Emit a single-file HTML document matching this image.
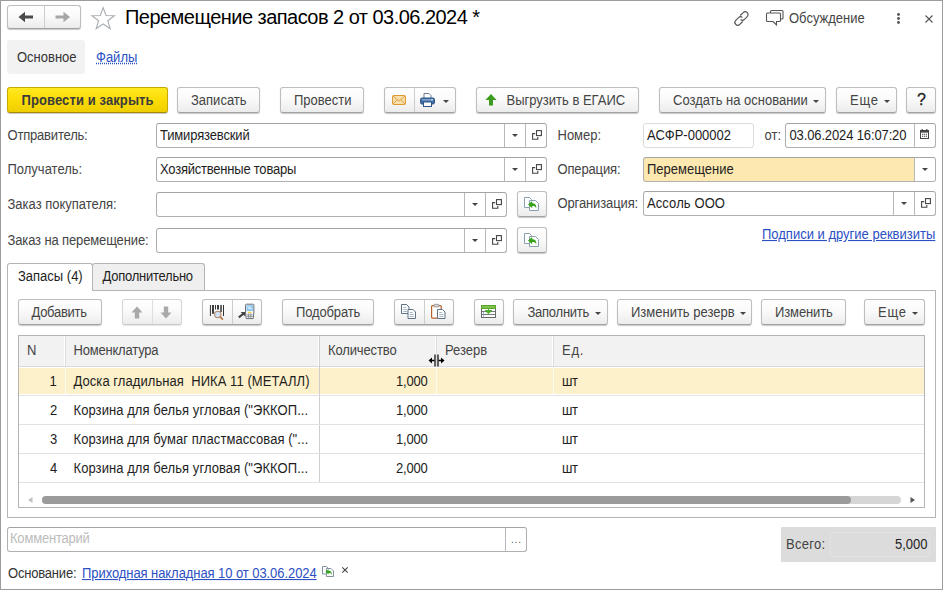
<!DOCTYPE html>
<html lang="ru"><head><meta charset="utf-8"><title>Перемещение запасов</title>
<style>
*{box-sizing:border-box;margin:0;padding:0}
html,body{width:943px;height:590px;overflow:hidden;background:#fff}
body{font-family:"Liberation Sans",Arial,sans-serif;font-size:13px;color:#333;position:relative}
.abs{position:absolute}
svg{position:absolute;overflow:visible}
.frame{position:absolute;left:0;top:0;width:943px;height:590px;border:1px solid #9c9c9c;pointer-events:none}
.btn{position:absolute;height:26px;border:1px solid #bdbdbd;border-bottom-color:#a2a2a2;border-radius:3px;background:linear-gradient(#fff,#fafafa 45%,#ececec);box-shadow:0 1px 1px rgba(0,0,0,.22)}
.btn.y{background:linear-gradient(#ffe920,#fbdc06 50%,#efce00);border-color:#c8a900;border-bottom-color:#a58a00}
.btn.dis{border-color:#d6d6d6;border-bottom-color:#c8c8c8;box-shadow:0 1px 1px rgba(0,0,0,.10)}
.bsep{position:absolute;top:1px;width:1px;height:24px;background:#cdcdcd}
.t{position:absolute;white-space:nowrap;line-height:16px;font-size:13px;color:#444;transform:scaleY(1.077);transform-origin:0 0}
.t.d{color:#1e1e1e}
.inp{position:absolute;height:25px;border:1px solid #b0b0b0;border-top-color:#a3a3a3;border-radius:3px;background:#fff;overflow:hidden}
.inp i{position:absolute;top:0;bottom:0;width:1px;background:#b8b8b8}
.inp b{position:absolute;top:0;bottom:0;background:#fff}
.car{position:absolute;width:0;height:0;border-left:3px solid transparent;border-right:3px solid transparent;border-top:3px solid #444}
a{color:#2b50c4;text-decoration:underline;text-underline-offset:1px}
.hl{position:absolute;top:336px;height:30px}
.row{position:absolute;left:19px;width:905px;height:1px;background:#e2e2e2}
</style></head><body>

<!-- title bar -->
<div class="btn" style="left:7px;top:5px;width:74px;height:24px"></div>
<div class="bsep" style="left:44px;top:6px;height:22px"></div>
<svg style="left:7px;top:5px" width="75" height="24" viewBox="0 0 75 24">
<path d="M11.5 12 L18 6.8 V10.6 H26 V13.4 H18 V17.2 Z" fill="#4a4a4a"/>
<path d="M63 12 L56.5 6.8 V10.6 H48.5 V13.4 H56.5 V17.2 Z" fill="#a6a6a6"/>
</svg>
<svg style="left:90.1px;top:5.5px" width="26.35" height="24.15" viewBox="0 0 24 22"><path d="M12 1.5 L14.6 8.6 L22.2 8.8 L16.2 13.4 L18.4 20.6 L12 16.4 L5.6 20.6 L7.8 13.4 L1.8 8.8 L9.4 8.6 Z" fill="#fff" stroke="#a8adb3" stroke-width="1"/></svg>
<div class="t" id="title" style="left:125px;top:5px;font-size:20px;line-height:24px;color:#000;letter-spacing:-0.53px;transform:none">Перемещение запасов 2 от 03.06.2024 *</div>

<!-- top-right icons -->
<svg style="left:732.5px;top:9.5px" width="17" height="17" viewBox="0 0 16 16" fill="none" stroke="#555" stroke-width="1.1">
<path d="M6.8 5.2 L9.6 2.4 a2.6 2.6 0 0 1 3.8 3.8 L10.8 8.8 a2.6 2.6 0 0 1 -3.6 0.2"/>
<path d="M9.2 10.8 L6.4 13.6 a2.6 2.6 0 0 1 -3.8 -3.8 L5.2 7.2 a2.6 2.6 0 0 1 3.6 -0.2"/>
</svg>
<svg style="left:766px;top:10px" width="18" height="16" viewBox="0 0 18 16" fill="#fff" stroke="#555" stroke-width="1.1">
<path d="M4.5 3 V1.5 a1 1 0 0 1 1 -1 H16 a1 1 0 0 1 1 1 V8 a1 1 0 0 1 -1 1 H14.5"/>
<path d="M1.5 3 H13.5 a1 1 0 0 1 1 1 V10.5 a1 1 0 0 1 -1 1 H10.5 V15 L7 11.5 H1.5 a1 1 0 0 1 -1 -1 V4 a1 1 0 0 1 1 -1 Z"/>
</svg>
<div class="t" id="obs" style="left:789px;top:10px">Обсуждение</div>
<svg style="left:896px;top:13px" width="5" height="11" viewBox="0 0 5 11" fill="#555"><circle cx="2.5" cy="1.5" r="1.45"/><circle cx="2.5" cy="5.5" r="1.45"/><circle cx="2.5" cy="9.5" r="1.45"/></svg>
<svg style="left:925px;top:15px" width="8" height="8" viewBox="0 0 8 8" stroke="#555" stroke-width="1.1"><path d="M0.5 0.5 L7.5 7.5 M7.5 0.5 L0.5 7.5"/></svg>

<!-- nav tabs -->
<div class="abs" style="left:7px;top:40px;width:78px;height:34px;background:#f2f2f2;border-radius:3px"></div>
<div class="t" id="osn" style="left:17px;top:49px;color:#333">Основное</div>
<div class="t" id="fil" style="left:96px;top:49px"><a style="text-decoration:underline dotted;text-underline-offset:1px">Файлы</a></div>

<!-- command bar -->
<div class="btn y" style="left:7px;top:87px;width:161px"></div>
<div class="t" id="b1" style="letter-spacing:0.1px;left:21.5px;top:92px;font-weight:bold;color:#3c3c3c">Провести и закрыть</div>
<div class="btn" style="left:177px;top:87px;width:83px"></div>
<div class="t" id="b2" style="left:191px;top:92px">Записать</div>
<div class="btn" style="left:280px;top:87px;width:84px"></div>
<div class="t" id="b3" style="left:294px;top:92px">Провести</div>
<div class="btn" style="left:384px;top:87px;width:72px"></div>
<div class="bsep" style="left:414px;top:88px"></div>
<!-- mail -->
<svg style="left:392px;top:95px" width="14" height="10" viewBox="0 0 14 10"><rect x="0.5" y="0.5" width="13" height="9" rx="1" fill="#f8dfae" stroke="#e0982f"/><path d="M1 1 L7 6 L13 1 M1 9 L5.2 4.6 M13 9 L8.8 4.6" fill="none" stroke="#e0982f" stroke-width="0.9"/></svg>
<!-- printer -->
<svg style="left:420px;top:93px" width="15" height="14" viewBox="0 0 15 14">
<path d="M4 5 V0.5 H9 L11 2.5 V5" fill="#fff" stroke="#6b7f95" stroke-width="1"/>
<rect x="0.5" y="5" width="14" height="6" rx="1.5" fill="#3f6da3" stroke="#2f5688"/>
<rect x="2" y="6.2" width="11" height="1.3" fill="#8fb0d6"/>
<rect x="3.5" y="9" width="8" height="4.5" fill="#fff" stroke="#2f5688"/>
<circle cx="12" cy="6.8" r="0.7" fill="#fff"/>
</svg>
<div class="car" style="left:443px;top:100px"></div>
<div class="btn" style="left:476px;top:87px;width:163px"></div>
<svg style="left:485px;top:94px" width="12" height="12" viewBox="0 0 12 12"><path d="M6 0 L11.6 6 H8 V11.6 H4 V6 H0.4 Z" fill="#3c9a1e"/></svg>
<div class="t" id="b4" style="left:506.5px;top:92px">Выгрузить в ЕГАИС</div>
<div class="btn" style="left:659px;top:87px;width:167px"></div>
<div class="t" id="b5" style="left:673px;top:92px">Создать на основании</div>
<div class="car" style="left:813px;top:100px"></div>
<div class="btn" style="left:836px;top:87px;width:61px"></div>
<div class="t" id="b6" style="letter-spacing:0.8px;left:850px;top:92px">Еще</div>
<div class="car" style="left:884px;top:100px"></div>
<div class="btn" style="left:906px;top:87px;width:30px"></div>
<div class="t" id="b7" style="left:917px;top:91px;font-size:16px;line-height:18px;color:#222;transform:none;-webkit-text-stroke:0.3px #222">?</div>

<!-- left fields -->
<div class="t" id="l1" style="letter-spacing:-0.19px;left:7.5px;top:127px">Отправитель:</div>
<div class="inp" style="left:156px;top:123px;width:391px"><i style="left:347px"></i><i style="left:368px"></i></div>
<div class="t d" id="v1" style="letter-spacing:-0.15px;left:160px;top:127px">Тимирязевский</div>
<div class="t" id="l2" style="left:7.5px;top:161px">Получатель:</div>
<div class="inp" style="left:156px;top:157px;width:391px"><i style="left:347px"></i><i style="left:368px"></i></div>
<div class="t d" id="v2" style="letter-spacing:-0.22px;left:160px;top:161px">Хозяйственные товары</div>
<div class="t" id="l3" style="left:7.5px;top:196px">Заказ покупателя:</div>
<div class="inp" style="left:156px;top:192px;width:351px"><i style="left:307px"></i><i style="left:328px"></i></div>
<div class="t" id="l4" style="letter-spacing:-0.13px;left:7.5px;top:232px">Заказ на перемещение:</div>
<div class="inp" style="left:156px;top:228px;width:351px"><i style="left:307px"></i><i style="left:328px"></i></div>
<div class="btn" style="left:517px;top:191px;width:30px"></div>
<div class="btn" style="left:517px;top:227px;width:30px"></div>

<!-- right fields -->
<div class="t" id="r1" style="left:557.5px;top:127px">Номер:</div>
<div class="inp" style="left:643px;top:123px;width:111px;border-color:#dcdcdc"></div>
<div class="t d" id="w1" style="left:647px;top:127px">АСФР-000002</div>
<div class="t" id="r1b" style="left:764.5px;top:127px">от:</div>
<div class="inp" style="left:785px;top:123px;width:151px"><i style="left:128px"></i></div>
<div class="t d" id="w1b" style="letter-spacing:-0.13px;left:789.5px;top:127px">03.06.2024 16:07:20</div>
<div class="t" id="r2" style="letter-spacing:-0.15px;left:557.5px;top:161px">Операция:</div>
<div class="inp" style="left:643px;top:157px;width:293px;background:#fde8b0"><b style="left:271px;right:0"></b><i style="left:270px"></i></div>
<div class="t d" id="w2" style="left:647px;top:161px">Перемещение</div>
<div class="t" id="r3" style="letter-spacing:-0.12px;left:557.5px;top:195px">Организация:</div>
<div class="inp" style="left:643px;top:191px;width:293px"><i style="left:249px"></i><i style="left:270px"></i></div>
<div class="t d" id="w3" style="letter-spacing:0.1px;left:647px;top:195px">Ассоль ООО</div>
<div class="t" id="r4" style="left:762px;top:226px"><a>Подписи и другие реквизиты</a></div>

<!-- tabs -->
<div class="abs" style="left:7px;top:290px;width:929px;height:228px;border:1px solid #b4b4b4"></div>
<div class="abs" style="left:92px;top:263px;width:113px;height:27px;border:1px solid #b4b4b4;border-bottom:none;border-radius:3px 3px 0 0;background:#efefef"></div>
<div class="abs" style="left:7px;top:263px;width:86px;height:28px;border:1px solid #b4b4b4;border-bottom:none;border-radius:3px 3px 0 0;background:#fff"></div>
<div class="t d" id="t1" style="left:18px;top:268px">Запасы (4)</div>
<div class="t d" id="t2" style="letter-spacing:-0.25px;left:102.5px;top:268px">Дополнительно</div>

<!-- table toolbar -->
<div class="btn" style="left:18px;top:299px;width:84px"></div>
<div class="t" id="c1" style="letter-spacing:-0.28px;left:31.5px;top:304px">Добавить</div>
<div class="btn dis" style="left:122px;top:299px;width:60px"></div>
<div class="bsep" style="left:152px;top:300px;background:#dedede"></div>
<svg style="left:131px;top:306px" width="12" height="13" viewBox="0 0 12 13"><path d="M6 0.5 L11.5 6.5 H8.2 V12.5 H3.8 V6.5 H0.5 Z" fill="#a9a9a9"/></svg>
<svg style="left:160px;top:306px" width="12" height="13" viewBox="0 0 12 13"><path d="M6 12.5 L11.5 6.5 H8.2 V0.5 H3.8 V6.5 H0.5 Z" fill="#a9a9a9"/></svg>
<div class="btn" style="left:202px;top:299px;width:60px"></div>
<div class="bsep" style="left:232px;top:300px"></div>
<div class="btn" style="left:282px;top:299px;width:92px"></div>
<div class="t" id="c2" style="letter-spacing:-0.15px;left:296px;top:304px">Подобрать</div>
<div class="btn" style="left:394px;top:299px;width:60px"></div>
<div class="bsep" style="left:424px;top:300px"></div>
<div class="btn" style="left:474px;top:299px;width:30px"></div>
<div class="btn" style="left:513px;top:299px;width:95px"></div>
<div class="t" id="c3" style="letter-spacing:-0.25px;left:527.5px;top:304px">Заполнить</div>
<div class="car" style="left:595px;top:312px"></div>
<div class="btn" style="left:617px;top:299px;width:135px"></div>
<div class="t" id="c4" style="left:631px;top:304px">Изменить резерв</div>
<div class="car" style="left:740px;top:312px"></div>
<div class="btn" style="left:761px;top:299px;width:85px"></div>
<div class="t" id="c5" style="letter-spacing:-0.12px;left:775px;top:304px">Изменить</div>
<div class="btn" style="left:864px;top:299px;width:61px"></div>
<div class="t" id="c6" style="letter-spacing:0.8px;left:878px;top:304px">Еще</div>
<div class="car" style="left:912px;top:312px"></div>

<!-- table -->
<div class="abs" style="left:18px;top:335px;width:907px;height:173px;border:1px solid #b4b4b4;background:#fff"></div>
<div class="abs" style="left:19px;top:336px;width:905px;height:30px;background:#f2f2f2"></div>
<div class="abs" style="left:19px;top:366px;width:905px;height:1px;background:#dadada"></div>
<div class="abs" style="left:19px;top:368px;width:905px;height:26px;background:#fdf1cb"></div>

<div class="t" id="h1" style="left:27px;top:342px">N</div>
<div class="t" id="h2" style="letter-spacing:-0.2px;left:73.5px;top:342px">Номенклатура</div>
<div class="t" id="h3" style="letter-spacing:-0.13px;left:328px;top:342px">Количество</div>
<div class="t" id="h4" style="left:445px;top:342px">Резерв</div>
<div class="t" id="h5" style="letter-spacing:0.8px;left:562px;top:342px">Ед.</div>


<!-- header separators -->
<div class="abs" style="left:64px;top:336px;width:1px;height:30px;background:#fff"></div><div class="abs" style="left:65px;top:336px;width:1px;height:30px;background:#dcdcdc"></div>
<div class="abs" style="left:318px;top:336px;width:1px;height:30px;background:#fff"></div><div class="abs" style="left:319px;top:336px;width:1px;height:147px;background:#cfcfcf"></div>
<div class="abs" style="left:435px;top:336px;width:1px;height:30px;background:#fff"></div><div class="abs" style="left:436px;top:336px;width:1px;height:30px;background:#dcdcdc"></div>
<div class="abs" style="left:552px;top:336px;width:1px;height:30px;background:#fff"></div><div class="abs" style="left:553px;top:336px;width:1px;height:30px;background:#dcdcdc"></div>
<!-- selected row separators -->
<div class="abs" style="left:65px;top:367px;width:1px;height:27px;background:#fffaf0"></div>
<div class="abs" style="left:436px;top:367px;width:1px;height:27px;background:#fffaf0"></div>
<div class="abs" style="left:553px;top:367px;width:1px;height:27px;background:#fffaf0"></div>
<!-- row lines -->
<div class="row" style="top:395px"></div><div class="row" style="top:424px"></div><div class="row" style="top:453px"></div><div class="row" style="top:482px"></div>
<!-- rows -->
<div class="t d" id="n1" style="left:49.5px;top:373px">1</div>
<div class="t d" id="a1" style="letter-spacing:0.06px;left:73.5px;top:373px;white-space:pre">Доска гладильная  НИКА 11 (МЕТАЛЛ)</div>
<div class="t d" id="q1" style="letter-spacing:-0.2px;left:396px;top:373px">1,000</div>
<div class="t d" id="u1" style="letter-spacing:-0.5px;left:562px;top:373px">шт</div>
<div class="t d" id="n2" style="left:50px;top:402px">2</div>
<div class="t d" id="a2" style="letter-spacing:0.07px;left:73.5px;top:402px">Корзина для белья угловая ("ЭККОП...</div>
<div class="t d" id="q2" style="letter-spacing:-0.2px;left:396px;top:402px">1,000</div>
<div class="t d" id="u2" style="letter-spacing:-0.5px;left:562px;top:402px">шт</div>
<div class="t d" id="n3" style="left:50px;top:431px">3</div>
<div class="t d" id="a3" style="letter-spacing:0.07px;left:73.5px;top:431px">Корзина для бумаг пластмассовая ("...</div>
<div class="t d" id="q3" style="letter-spacing:-0.2px;left:396px;top:431px">1,000</div>
<div class="t d" id="u3" style="letter-spacing:-0.5px;left:562px;top:431px">шт</div>
<div class="t d" id="n4" style="left:50px;top:460px">4</div>
<div class="t d" id="a4" style="letter-spacing:0.07px;left:73.5px;top:460px">Корзина для белья угловая ("ЭККОП...</div>
<div class="t d" id="q4" style="letter-spacing:-0.2px;left:396px;top:460px">2,000</div>
<div class="t d" id="u4" style="letter-spacing:-0.5px;left:562px;top:460px">шт</div>
<!-- scrollbar -->
<div class="abs" style="left:42px;top:496px;width:859px;height:8px;border-radius:4px;background:#d6d6d6"></div>
<div class="abs" style="left:42px;top:496px;width:809px;height:8px;border-radius:4px;background:#9b9b9b"></div>
<svg style="left:28px;top:497px" width="5" height="6" viewBox="0 0 5 6"><path d="M4.5 0 V6 L0 3 Z" fill="#c0c0c0"/></svg>
<svg style="left:910px;top:497px" width="5" height="6" viewBox="0 0 5 6"><path d="M0.5 0 V6 L5 3 Z" fill="#555"/></svg>
<!-- resize cursor -->
<svg style="left:428px;top:354px" width="17" height="13" viewBox="0 0 17 13"><path d="M7 0.5 V12.5 M10 0.5 V12.5" stroke="#000" stroke-width="1.2" fill="none"/><path d="M0.5 6.5 L4 3.5 V5.8 H6.4 V7.2 H4 V9.5 Z M16.5 6.5 L13 3.5 V5.8 H10.6 V7.2 H13 V9.5 Z" fill="#000"/></svg>

<!-- field icons -->
<div class="car" style="left:512px;top:134px"></div><svg style="left:531.5px;top:130px" width="10" height="10" viewBox="0 0 10 10" fill="none" stroke="#444" stroke-width="1.1"><rect x="4.5" y="0.6" width="4.9" height="5"/><path d="M3.2 3.6 H0.6 V9.2 H5.8 V7"/></svg>
<div class="car" style="left:512px;top:168px"></div><svg style="left:531.5px;top:164px" width="10" height="10" viewBox="0 0 10 10" fill="none" stroke="#444" stroke-width="1.1"><rect x="4.5" y="0.6" width="4.9" height="5"/><path d="M3.2 3.6 H0.6 V9.2 H5.8 V7"/></svg>
<div class="car" style="left:472px;top:203px"></div><svg style="left:491.5px;top:199px" width="10" height="10" viewBox="0 0 10 10" fill="none" stroke="#444" stroke-width="1.1"><rect x="4.5" y="0.6" width="4.9" height="5"/><path d="M3.2 3.6 H0.6 V9.2 H5.8 V7"/></svg>
<div class="car" style="left:472px;top:239px"></div><svg style="left:491.5px;top:235px" width="10" height="10" viewBox="0 0 10 10" fill="none" stroke="#444" stroke-width="1.1"><rect x="4.5" y="0.6" width="4.9" height="5"/><path d="M3.2 3.6 H0.6 V9.2 H5.8 V7"/></svg>
<div class="car" style="left:922px;top:168px"></div>
<div class="car" style="left:901px;top:202px"></div><svg style="left:920.5px;top:198px" width="10" height="10" viewBox="0 0 10 10" fill="none" stroke="#444" stroke-width="1.1"><rect x="4.5" y="0.6" width="4.9" height="5"/><path d="M3.2 3.6 H0.6 V9.2 H5.8 V7"/></svg>
<svg style="left:920px;top:129px" width="9" height="10" viewBox="0 0 9 10"><rect x="0.5" y="1.5" width="8" height="8" fill="#fff" stroke="#444"/><rect x="0" y="1" width="9" height="2.6" fill="#444"/><rect x="1.6" y="0" width="1.2" height="2" fill="#444"/><rect x="6.2" y="0" width="1.2" height="2" fill="#444"/><path d="M2 5.2h1.2M3.9 5.2h1.2M5.8 5.2h1.2M2 7.2h1.2M3.9 7.2h1.2M5.8 7.2h1.2" stroke="#444" stroke-width="1.1"/></svg>
<svg style="left:524px;top:197px" width="15" height="14" viewBox="0 0 15 14"><path d="M0.5 0.5 H5.5 L7.5 2.5 V10.5 H0.5 Z" fill="#fff" stroke="#8aa0b0"/><path d="M5.5 3.5 H11.5 L14.5 6.5 V13.5 H5.5 Z" fill="#fff" stroke="#8aa0b0"/><path d="M4 7.6 L8.2 4 V6.2 C11.5 6.2 12.6 8.4 12.2 11.4 C11.6 9.6 10.6 9 8.2 9 V11.2 Z" fill="#35a31a"/></svg><svg style="left:524px;top:233px" width="15" height="14" viewBox="0 0 15 14"><path d="M0.5 0.5 H5.5 L7.5 2.5 V10.5 H0.5 Z" fill="#fff" stroke="#8aa0b0"/><path d="M5.5 3.5 H11.5 L14.5 6.5 V13.5 H5.5 Z" fill="#fff" stroke="#8aa0b0"/><path d="M4 7.6 L8.2 4 V6.2 C11.5 6.2 12.6 8.4 12.2 11.4 C11.6 9.6 10.6 9 8.2 9 V11.2 Z" fill="#35a31a"/></svg>
<svg style="left:209px;top:305px" width="16" height="15" viewBox="0 0 16 15"><path d="M1.4 0 V11 M14.5 0 V11" stroke="#333" stroke-width="1"/><path d="M4 0 V8.7 M9 0 V4.5" stroke="#333" stroke-width="1.9"/><path d="M6.5 0 V4.5" stroke="#333" stroke-width="1"/><path d="M12 0 V7" stroke="#333" stroke-width="1.5"/><circle cx="8.8" cy="9.5" r="3.2" fill="#cfe0f7" stroke="#b58a66" stroke-width="1.1"/><path d="M11.3 12 L13.4 14.1" stroke="#b8763f" stroke-width="1.7" stroke-linecap="round"/></svg>
<svg style="left:237.5px;top:304px" width="17" height="15" viewBox="0 0 17 15"><path d="M7.5 1.2 a1 1 0 0 1 1 -1 H14.9 a1 1 0 0 1 1 1 V8 L15.2 14.6 H8.2 L7.5 8 Z" fill="#f4f4f4" stroke="#6a6f75" stroke-width="1"/><rect x="8.5" y="1.2" width="6.4" height="5.8" fill="#8cc6f2"/><path d="M9.3 3 h3.6 M10.3 4.6 h3.8" stroke="#e8f4fd" stroke-width="1"/><rect x="10.2" y="7.7" width="3" height="1.2" rx="0.4" fill="#f2d21f"/><path d="M10.6 9.3 V14 M12.8 9.3 V14 M8.8 10.9 H14.6 M8.8 12.5 H14.6" stroke="#7a7f85" stroke-width="0.7"/><path d="M0.8 13.4 L5.6 9.6" stroke="#444" stroke-width="2.1"/><path d="M2.6 8 H7.2 V12.6 Z" fill="#444"/></svg>
<svg style="left:400.5px;top:304px" width="16" height="15" viewBox="0 0 16 15"><path d="M0.5 0.5 H5.5 L8 3 V9.5 H0.5 Z" fill="#fff" stroke="#5d7185"/><path d="M2.2 3.5h3M2.2 5.5h4M2.2 7.5h4" stroke="#9fb0c0" stroke-width="0.9"/><path d="M7 5.5 H12 L14.5 8 V14.5 H7 Z" fill="#fff" stroke="#5d7185"/><path d="M8.7 8.5h3M8.7 10.5h4.2M8.7 12.5h4.2" stroke="#9fb0c0" stroke-width="0.9"/></svg>
<svg style="left:430.5px;top:304px" width="15" height="15" viewBox="0 0 15 15"><rect x="0.6" y="1.6" width="9.6" height="12.6" rx="1" fill="#fff" stroke="#b5602a" stroke-width="1.2"/><rect x="3" y="0.3" width="5" height="2.6" rx="1" fill="#d8d8d8" stroke="#8a8a8a" stroke-width="0.8"/><path d="M6.5 5.5 H11.5 L14 8 V14.5 H6.5 Z" fill="#fff" stroke="#5d7185"/><path d="M8.2 8.5h3M8.2 10.5h4.2M8.2 12.5h4.2" stroke="#9fb0c0" stroke-width="0.9"/></svg>
<svg style="left:481px;top:305px" width="15" height="13" viewBox="0 0 15 13"><rect x="0.5" y="0.5" width="14" height="12" fill="#fff" stroke="#6a6a6a"/><rect x="0.5" y="0.5" width="14" height="3" fill="#7fc24a" stroke="#5aa52c"/><path d="M1 6.5h13M1 9.5h13" stroke="#6a6a6a" stroke-width="0.9"/><path d="M7.5 3.5 V6 M4.2 5.6 H10.8 L7.5 8.6 Z" fill="#4caf2a" stroke="#4caf2a" stroke-width="1"/><path d="M2 8h1M2 11h1" stroke="#4a7ab0" stroke-width="1"/></svg>
<svg style="left:321.5px;top:566px" width="12" height="11" viewBox="0 0 12 11"><path d="M0.5 0.5 H4.5 L6 2 V8 H0.5 Z" fill="#fff" stroke="#7f93a3"/><path d="M4.5 2.5 H9 L11.5 5 V10.5 H4.5 Z" fill="#fff" stroke="#7f93a3"/><path d="M3.4 5.8 L6.6 3.2 V4.8 C9 4.8 10 6.4 9.7 8.8 C9.2 7.4 8.4 7 6.6 7 V8.6 Z" fill="#35a31a"/></svg>
<svg style="left:342px;top:567px" width="6" height="6" viewBox="0 0 6 6" stroke="#444" stroke-width="1.1"><path d="M0.3 0.3 L5.7 5.7 M5.7 0.3 L0.3 5.7"/></svg>

<!-- bottom -->
<div class="inp" style="left:7px;top:527px;width:520px"><i style="left:497px"></i></div>
<div class="t" id="dots" style="left:511px;top:532px;font-size:10px;color:#555;letter-spacing:0.8px;transform:none">...</div>
<div class="t" id="cm" style="letter-spacing:-0.2px;left:10px;top:530px;color:#bcbcbc">Комментарий</div>
<div class="abs" style="left:781px;top:527px;width:155px;height:35px;background:#dcdcdc"></div>
<div class="abs" style="left:830px;top:532px;width:100px;height:25px;border:1px solid #e3e3e3;border-radius:3px"></div>
<div class="t" id="vs" style="letter-spacing:0.3px;left:786px;top:536px">Всего:</div>
<div class="t d" id="vv" style="left:895px;top:536px">5,000</div>
<div class="t" id="os" style="letter-spacing:-0.19px;left:8px;top:565px;color:#333">Основание:</div>
<div class="t" id="ol" style="letter-spacing:-0.07px;left:82px;top:565px"><a>Приходная накладная 10 от 03.06.2024</a></div>

<div class="frame"></div>
</body></html>
